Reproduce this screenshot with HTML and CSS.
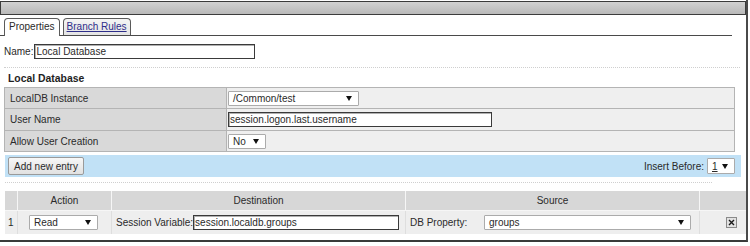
FILE: index.html
```html
<!doctype html>
<html lang="en">
<head>
    <meta charset="UTF-8">
    <meta name="viewport" content="width=device-width, initial-scale=1.0">
    <title>Local Database</title>
    <link rel="stylesheet" href="styles.css">
</head>
<body>
<div class="window">
    <div class="title-bar"></div>

    <div class="tabs">
        <span class="tab active">Properties</span>
        <span class="tab"><a href="#">Branch Rules</a></span>
    </div>

    <div class="name-row">
        <span class="name-label">Name:</span>
        <span class="text-box name-box">Local Database</span>
    </div>

    <div class="dotted-line"></div>

    <h2 class="section-title">Local Database</h2>

    <table class="props">
        <tr>
            <td class="label">LocalDB Instance</td>
            <td class="value"><span class="select instance-select">/Common/test</span></td>
        </tr>
        <tr class="tall">
            <td class="label">User Name</td>
            <td class="value"><span class="text-box user-box">session.logon.last.username</span></td>
        </tr>
        <tr>
            <td class="label">Allow User Creation</td>
            <td class="value"><span class="select no-select">No</span></td>
        </tr>
    </table>

    <div class="toolbar">
        <button class="button">Add new entry</button>
        <div class="insert-before">
            Insert Before:
            <span class="select insert-select"><u>1</u></span>
        </div>
    </div>

    <div class="dotted-line short"></div>

    <table class="entries">
        <tr class="head">
            <th class="col-num"></th>
            <th class="col-action">Action</th>
            <th class="col-dest">Destination</th>
            <th class="col-source">Source</th>
            <th class="col-del"></th>
        </tr>
        <tr class="entry">
            <td class="col-num">1</td>
            <td class="col-action"><span class="select read-select">Read</span></td>
            <td class="col-dest">
                <div class="field">
                    <span>Session Variable:</span>
                    <span class="text-box dest-box">session.localdb.groups</span>
                </div>
            </td>
            <td class="col-source">
                <div class="field">
                    <span class="prop-label">DB Property:</span>
                    <span class="select source-select">groups</span>
                </div>
            </td>
            <td class="col-del">
                <svg class="delete" width="11" height="11" viewBox="0 0 11 11">
                    <rect x="0.5" y="0.5" width="10" height="10" fill="#e2e2e2" stroke="#8a8a8a"/>
                    <path d="M3 3 L8 8 M8 3 L3 8" stroke="#1a1a1a" stroke-width="1.4"/>
                </svg>
            </td>
        </tr>
    </table>
</div>
</body>
</html>
```

FILE: styles.css
```css
body {
    margin: 0;
    background-color: #fff;
    font-family: "Liberation Sans", Arial, sans-serif;
    font-size: 10px;
    color: #2a2a2a;
}

.window {
    width: 746px;
    height: 240px;
    border-right: 2px solid #4a4a4a;
    border-bottom: 2px solid #3a3a3a;
    overflow: hidden;
}

.title-bar {
    box-sizing: border-box;
    height: 14px;
    margin-top: 1px;
    border: 1px solid #3c3c3c;
    background: linear-gradient(#d2d2d2, #b9b9b9);
}

.tabs {
    display: flex;
    align-items: flex-end;
    gap: 3px;
    width: 728px;
    margin-top: 3px;
    padding-left: 4px;
    border-bottom: 1px solid #4a4a4a;
}

.tab {
    box-sizing: border-box;
    height: 17px;
    padding: 0 3px;
    line-height: 16px;
    border: 1px solid #5a5a5a;
    border-bottom: none;
    border-radius: 4px 4px 0 0;
    background: linear-gradient(#f4f4f4, #e4e4e4);
}

.tab.active {
    height: 18px;
    margin-bottom: -1px;
    padding: 0 4px;
    background: #fff;
}

.tab a {
    color: #2e2e8a;
}

.name-row {
    display: flex;
    align-items: center;
    gap: 1px;
    margin-top: 8px;
    padding-left: 4px;
}

.text-box {
    box-sizing: border-box;
    display: inline-block;
    height: 15px;
    padding-left: 1px;
    line-height: 13px;
    border: 1px solid #3a3a3a;
    box-shadow: inset 1px 1px 0 #b0b0b0;
    background: #fff;
    white-space: nowrap;
}

.name-box {
    width: 221px;
}

.dotted-line {
    width: 736px;
    margin: 8px 0 0 4px;
    border-top: 1px dotted #cfcfcf;
}

.dotted-line.short {
    width: 707px;
    margin: 5px 0 0 5px;
}

.section-title {
    margin: 4px 0 0 8px;
    font-size: 10.4px;
    line-height: 14px;
    color: #1e1e1e;
}

.props {
    width: 731px;
    margin: 1px 0 0 4px;
    border-collapse: collapse;
}

.props td {
    height: 20px;
    padding: 0;
    border: 1px solid #b4b4b4;
}

.props tr.tall td {
    height: 21px;
}

.props .label {
    width: 216px;
    padding-left: 5px;
    background: #d9d9d9;
}

.props .value {
    padding-left: 1px;
    background: #efefef;
}

.select {
    box-sizing: border-box;
    display: inline-flex;
    align-items: center;
    justify-content: space-between;
    height: 15px;
    padding: 0 6px 0 4px;
    border: 1px solid #ababab;
    border-radius: 1px;
    background: #fff;
    vertical-align: middle;
}

.select::after {
    content: "";
    border-left: 3px solid transparent;
    border-right: 3px solid transparent;
    border-top: 5px solid #111;
}

.instance-select {
    width: 131px;
}

.user-box {
    width: 264px;
    vertical-align: middle;
}

.no-select {
    width: 38px;
}

.toolbar {
    box-sizing: border-box;
    display: flex;
    align-items: center;
    justify-content: space-between;
    width: 736px;
    height: 22px;
    margin: 3px 0 0 5px;
    padding: 0 6px 0 3px;
    background: #c1e1f6;
}

.button {
    box-sizing: border-box;
    height: 18px;
    padding: 0 5px;
    border: 1px solid #9a9a9a;
    border-radius: 2px;
    background: linear-gradient(#f7f7f7, #e1e1e1);
    font-family: inherit;
    font-size: 10px;
    color: #2a2a2a;
}

.insert-before {
    display: flex;
    align-items: center;
    gap: 3px;
}

.insert-select {
    width: 28px;
    height: 16px;
}

.entries {
    width: 739px;
    margin: 8px 0 0 5px;
    border-collapse: collapse;
    table-layout: fixed;
}

.entries th {
    height: 19px;
    padding: 0;
    font-weight: normal;
    background: #d7d7d7;
    border: 1px solid #f6f6f6;
    border-top: none;
}

.entries td {
    height: 23px;
    padding: 0;
    background: #eeeeee;
    border: 1px solid #dedede;
    border-bottom: none;
}

.entries tr > :first-child {
    border-left: none;
}

.entries tr > :last-child {
    border-right: none;
}

.entries .col-num {
    width: 12px;
}

.entries td.col-num {
    padding-left: 3px;
}

.entries .col-action {
    width: 93px;
}

.entries td.col-action {
    padding-left: 11px;
}

.entries .col-dest,
.entries .col-source {
    width: 293px;
}

.entries td.col-dest,
.entries td.col-source {
    padding-left: 4px;
}

.entries .col-del {
    width: 48px;
}

.entries td.col-del {
    padding-left: 26px;
}

.field {
    display: flex;
    align-items: center;
}

.read-select {
    width: 69px;
}

.dest-box {
    width: 206px;
}

.prop-label {
    width: 74px;
}

.source-select {
    width: 207px;
}

.delete {
    display: block;
}
```
